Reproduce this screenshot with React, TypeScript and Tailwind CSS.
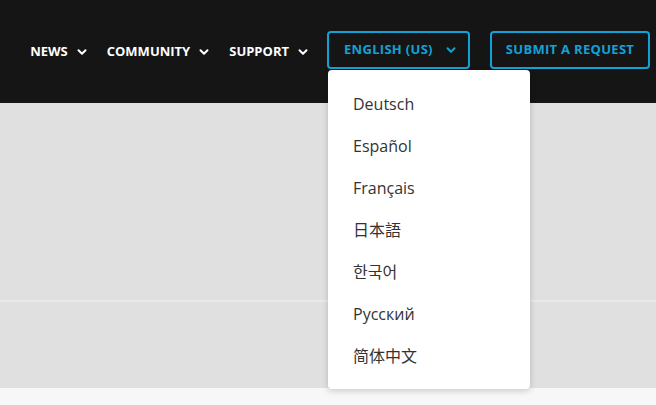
const navItems = ["News", "Community", "Support"];

const languages = [
  "Deutsch",
  "Español",
  "Français",
  "日本語",
  "한국어",
  "Русский",
  "简体中文",
];

const Chevron = ({ className }: { className?: string }) => (
  <svg viewBox="0 0 10 10" className={className} fill="none">
    <path
      d="M1.5 3.2 5 6.7 8.5 3.2"
      stroke="currentColor"
      strokeWidth="2"
      strokeLinecap="round"
      strokeLinejoin="round"
    />
  </svg>
);

const App = () => {
  return (
    <div
      className="w-[656px] h-[405px] overflow-hidden bg-[#f7f7f7]"
      style={{ fontFamily: '"Open Sans", "Noto Sans", sans-serif' }}
    >
      {/* Header */}
      <header className="h-[103px] bg-[#151515] flex items-center justify-end pr-[6px] pb-[4px]">
        <nav className="flex items-center gap-[20px] mr-[19px] mt-[4px]">
          {navItems.map((item) => (
            <div
              key={item}
              className="flex items-center gap-[9px] text-white text-[13px] font-bold uppercase"
            >
              <span>{item}</span>
              <Chevron className="w-[10px] h-[10px]" />
            </div>
          ))}
        </nav>

        {/* Language picker */}
        <div className="relative mr-[20px]">
          <button className="w-[143px] h-[38px] border-2 border-[#12a2d8] rounded-[4px] flex items-center pl-[15px] gap-[13px] text-[#12a2d8] text-[13px] font-bold uppercase tracking-[0.3px]">
            <span>English (US)</span>
            <Chevron className="w-[10px] h-[10px]" />
          </button>
          <ul
            className="absolute left-[1px] top-[39px] w-[202px] bg-white rounded-[4px] pt-[13px] pb-[12px] shadow-[0_2px_6px_rgba(0,0,0,0.18)] z-10"
            style={{
              fontFamily:
                '"Open Sans", "Noto Sans", "Noto Sans CJK SC", "Noto Sans CJK KR", sans-serif',
            }}
          >
            {languages.map((lang) => (
              <li
                key={lang}
                className="h-[42px] flex items-center pl-[25px] text-[16px] text-[#333333]"
              >
                {lang}
              </li>
            ))}
          </ul>
        </div>

        <button className="w-[160px] h-[38px] border-2 border-[#12a2d8] rounded-[4px] flex items-center justify-center text-[#12a2d8] text-[13px] font-bold uppercase tracking-[0.3px]">
          Submit a request
        </button>
      </header>

      {/* Body */}
      <section className="h-[199px] bg-[#e0e0e0] border-b-2 border-[#e9e9e9]" />
      <section className="h-[86px] bg-[#e0e0e0]" />
    </div>
  );
};

export default App;
